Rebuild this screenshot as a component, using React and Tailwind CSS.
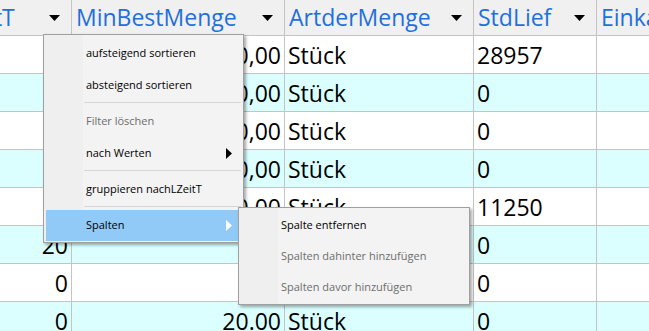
import React from "react";

const rows = [
  { l: "0", m: "20,00", a: "Stück", s: "28957" },
  { l: "0", m: "20,00", a: "Stück", s: "0" },
  { l: "0", m: "20,00", a: "Stück", s: "0" },
  { l: "0", m: "20,00", a: "Stück", s: "0" },
  { l: "0", m: "20,00", a: "Stück", s: "11250" },
  { l: "20", m: "", a: "Stück", s: "0" },
  { l: "0", m: "", a: "Stück", s: "0" },
  { l: "0", m: "20.00", a: "Stück", s: "0" },
];

function Down() {
  return (
    <svg width="11" height="6" viewBox="0 0 11 6" className="shrink-0">
      <polygon points="0,0 11,0 5.5,6" fill="#000" />
    </svg>
  );
}

function Right({ color }) {
  return (
    <svg width="6" height="11" viewBox="0 0 6 11" className="shrink-0">
      <polygon points="0,0 6,5.5 0,11" fill={color} />
    </svg>
  );
}

function HeaderCell({ label, w }) {
  return (
    <div
      className={`${w} shrink-0 h-[35px] flex items-center justify-between pl-[4px] pr-[11px] border-r border-[#c4c4c4] overflow-hidden`}
    >
      <span className="text-[23px] leading-[35px] text-[#1f6fdc] whitespace-nowrap">{label}</span>
      <Down />
    </div>
  );
}

function Item({ children, disabled, arrow }) {
  return (
    <div className="h-[32px] flex items-center justify-between pl-[42px] pr-[11px]">
      <span className={disabled ? "text-[#6d6d6d]" : "text-black"}>{children}</span>
      {arrow && <Right color="#000" />}
    </div>
  );
}

function Sep() {
  return (
    <div className="h-[4px] pt-[1px]">
      <div className="ml-[40px] mr-[2px] h-px bg-[#d7d7d7]" />
    </div>
  );
}

export default function App() {
  return (
    <div className="relative w-[649px] h-[331px] overflow-hidden bg-white font-['Open_Sans',sans-serif]">
      <div className="-ml-[54px] w-[900px]">
        <div className="flex bg-[#f0f0f0] border-b border-[#c4c4c4]">
          <HeaderCell label="LZeitT" w="w-[126px]" />
          <HeaderCell label="MinBestMenge" w="w-[213px]" />
          <HeaderCell label="ArtderMenge" w="w-[189px]" />
          <HeaderCell label="StdLief" w="w-[123px]" />
          <div className="w-[200px] h-[35px] flex items-center pl-[4px]">
            <span className="text-[23px] leading-[35px] text-[#1f6fdc] whitespace-nowrap">Einkaufspreis</span>
          </div>
        </div>
        {rows.map((r, i) => (
          <div
            key={i}
            className={`flex h-[38px] border-b border-[#c4c4c4] text-[23px] text-black ${
              i % 2 === 1 ? "bg-[#dbffff]" : "bg-white"
            }`}
          >
            <div className="w-[126px] shrink-0 border-r border-[#c4c4c4] flex items-center justify-end pr-[3px] pt-[2px]">{r.l}</div>
            <div className="w-[213px] shrink-0 border-r border-[#c4c4c4] flex items-center justify-end pr-[3px] pt-[2px]">{r.m}</div>
            <div className="w-[189px] shrink-0 border-r border-[#c4c4c4] flex items-center pl-[3px] pt-[2px]">{r.a}</div>
            <div className="w-[123px] shrink-0 border-r border-[#c4c4c4] flex items-center pl-[3px] pt-[2px]">{r.s}</div>
            <div className="w-[200px] shrink-0" />
          </div>
        ))}
      </div>

      {/* context menu */}
      <div className="absolute left-[43px] top-[34px] w-[201px] border border-[#a0a0a0] pt-[2px] pb-[1px] text-[11px] bg-[linear-gradient(90deg,#efefef_0,#efefef_39px,#f3f3f3_39px)] shadow-[2px_2px_3px_rgba(0,0,0,0.35)]">
        <Item>aufsteigend sortieren</Item>
        <Item>absteigend sortieren</Item>
        <Sep />
        <Item disabled>Filter löschen</Item>
        <Item arrow>nach Werten</Item>
        <Sep />
        <Item>gruppieren nachLZeitT</Item>
        <Sep />
        <div className="h-[32px] pt-[1px] pl-[2px] pr-[1px]">
          <div className="h-[31px] bg-[#91c9f7] flex items-center justify-between pl-[40px] pr-[10px]">
            <span className="text-black">Spalten</span>
            <Right color="#fff" />
          </div>
        </div>
      </div>

      {/* submenu */}
      <div className="absolute left-[238px] top-[207px] w-[232px] border border-[#a0a0a0] pt-[2px] pb-[1px] text-[11px] bg-[linear-gradient(90deg,#efefef_0,#efefef_39px,#f3f3f3_39px)] shadow-[2px_2px_3px_rgba(0,0,0,0.35)]">
        <div className="h-[31px] flex items-center pl-[42px] text-black">Spalte entfernen</div>
        <div className="h-[31px] flex items-center pl-[42px] text-[#6d6d6d]">Spalten dahinter hinzufügen</div>
        <div className="h-[31px] flex items-center pl-[42px] text-[#6d6d6d]">Spalten davor hinzufügen</div>
      </div>
    </div>
  );
}
